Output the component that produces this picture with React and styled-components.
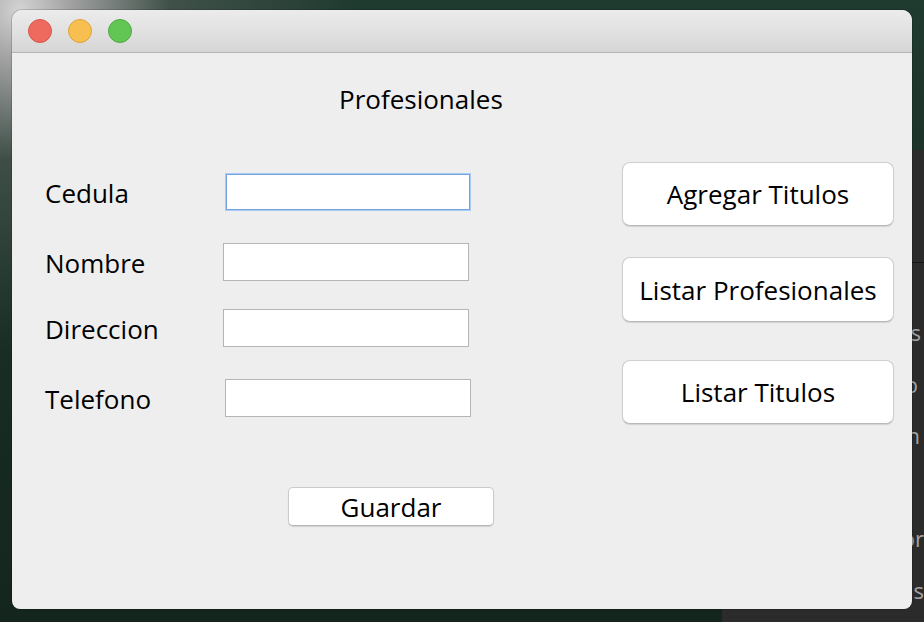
import React from "react";
import styled, { createGlobalStyle } from "styled-components";

const Global = createGlobalStyle`
  html, body { margin: 0; padding: 0; }
  body {
    width: 924px;
    height: 622px;
    overflow: hidden;
    font-family: "Open Sans", "Liberation Sans", sans-serif;
  }
`;

const Desktop = styled.div`
  position: relative;
  width: 924px;
  height: 622px;
  overflow: hidden;
  background:
    radial-gradient(circle at 20px 10px, #d4d4d4 0, #a2a2a2 50px, rgba(90, 100, 95, 0.55) 150px, rgba(0, 0, 0, 0) 340px),
    linear-gradient(180deg, #1f3a2f 0%, #1a3027 40%, #14251d 100%);
`;

const BackPanel = styled.div`
  position: absolute;
  left: 722px;
  top: 150px;
  right: 0;
  bottom: 0;
  background: #2b2b2b;
  display: flex;
  flex-direction: column;
`;

const BackHeader = styled.div`
  height: 112px;
  border-bottom: 1px solid #161616;
  flex: none;
`;

const BackList = styled.div`
  display: flex;
  flex-direction: column;
  padding-top: 57px;
`;

const BackLine = styled.div`
  height: 51.6px;
  font-family: "Open Sans", "Liberation Sans", sans-serif;
  font-size: 22px;
  line-height: 24px;
  color: #a3a3a3;
  white-space: nowrap;
  text-align: right;
  margin-right: ${(p) => p.$right}px;
`;

const Window = styled.div`
  position: absolute;
  left: 12px;
  top: 10px;
  width: 900px;
  height: 599px;
  border-radius: 10px 10px 8px 8px;
  background: #eeeeee;
  overflow: hidden;
  display: flex;
  flex-direction: column;
  box-shadow: 0 0 0 1px rgba(0, 0, 0, 0.15);
`;

const TitleBar = styled.div`
  height: 42px;
  flex: none;
  display: flex;
  align-items: center;
  gap: 16px;
  padding-left: 16px;
  background: linear-gradient(180deg, #ececec 0%, #d6d6d6 100%);
  border-bottom: 1px solid #b3b3b3;
`;

const Light = styled.span`
  width: 22px;
  height: 22px;
  border-radius: 50%;
  background: ${(p) => p.$fill};
  border: 1px solid ${(p) => p.$edge};
`;

const Content = styled.div`
  flex: 1;
  display: flex;
  flex-direction: column;
  color: #000;
  font-size: 26px;
`;

const Heading = styled.div`
  padding: 31px 0 0 327px;
  line-height: 30px;
`;

const Main = styled.div`
  display: flex;
  align-items: flex-start;
  margin-top: 48px;
`;

const Form = styled.div`
  display: flex;
  flex-direction: column;
  padding: 11px 0 0 33px;
`;

const Row = styled.div`
  display: flex;
  align-items: center;
  margin-top: ${(p) => p.$top}px;
`;

const Label = styled.div`
  width: 178px;
  line-height: 30px;
  padding-top: 1px;
`;

const Field = styled.input`
  box-sizing: border-box;
  width: 246px;
  height: 38px;
  margin: 0 0 0 ${(p) => p.$shift}px;
  background: #fff;
  border: 1px solid ${(p) => (p.$focused ? "#a8cbf3" : "#b5b5b5")};
  box-shadow: ${(p) => (p.$focused ? "inset 0 0 0 1px #74a5e2" : "none")};
  outline: none;
  font-family: inherit;
  font-size: 22px;
  padding: 0 6px;
`;

const Actions = styled.div`
  margin-left: auto;
  margin-right: 18px;
  display: flex;
  flex-direction: column;
`;

const BigButton = styled.button`
  box-sizing: border-box;
  width: 272px;
  height: ${(p) => p.$h}px;
  margin-top: ${(p) => p.$top}px;
  background: #fff;
  border: 1px solid #cfcfcf;
  border-bottom-color: #b9b9b9;
  border-radius: 8px;
  box-shadow: 0 1px 1px rgba(0, 0, 0, 0.12);
  font-family: inherit;
  font-size: 26px;
  color: #000;
  padding: 0;
  line-height: 30px;
`;

const Footer = styled.div`
  padding: 63px 0 0 276px;
  display: flex;
`;

const SaveButton = styled.button`
  box-sizing: border-box;
  width: 206px;
  height: 39px;
  background: #fff;
  border: 1px solid #cbcbcb;
  border-bottom-color: #b5b5b5;
  border-radius: 5px;
  box-shadow: 0 1px 1px rgba(0, 0, 0, 0.12);
  font-family: inherit;
  font-size: 26px;
  color: #000;
  padding: 0;
  line-height: 30px;
`;

const fields = [
  { label: "Cedula", top: 0, shift: 2, focused: true },
  { label: "Nombre", top: 32, shift: 0 },
  { label: "Direccion", top: 28, shift: 0 },
  { label: "Telefono", top: 32, shift: 2 },
];

const backLines = [
  { text: "Cursos", right: 3 },
  { text: "Nuevo", right: 6 },
  { text: "Examen", right: 4 },
  { text: "\u00a0", right: 0 },
  { text: "Doctor", right: 0 },
  { text: "Notas", right: 0 },
];

export default function App() {
  return (
    <>
      <Global />
      <Desktop>
        <BackPanel>
          <BackHeader />
          <BackList>
            {backLines.map((l, i) => (
              <BackLine key={i} $right={l.right}>
                {l.text}
              </BackLine>
            ))}
          </BackList>
        </BackPanel>
        <Window>
          <TitleBar>
            <Light $fill="#ee6a5e" $edge="#d5574b" />
            <Light $fill="#f6bf4f" $edge="#dda43b" />
            <Light $fill="#62c655" $edge="#4fa841" />
          </TitleBar>
          <Content>
            <Heading>Profesionales</Heading>
            <Main>
              <Form>
                {fields.map((f) => (
                  <Row key={f.label} $top={f.top}>
                    <Label>{f.label}</Label>
                    <Field $shift={f.shift} $focused={f.focused} />
                  </Row>
                ))}
              </Form>
              <Actions>
                <BigButton $h={64} $top={0}>Agregar Titulos</BigButton>
                <BigButton $h={65} $top={31}>Listar Profesionales</BigButton>
                <BigButton $h={64} $top={38}>Listar Titulos</BigButton>
              </Actions>
            </Main>
            <Footer>
              <SaveButton>Guardar</SaveButton>
            </Footer>
          </Content>
        </Window>
      </Desktop>
    </>
  );
}
